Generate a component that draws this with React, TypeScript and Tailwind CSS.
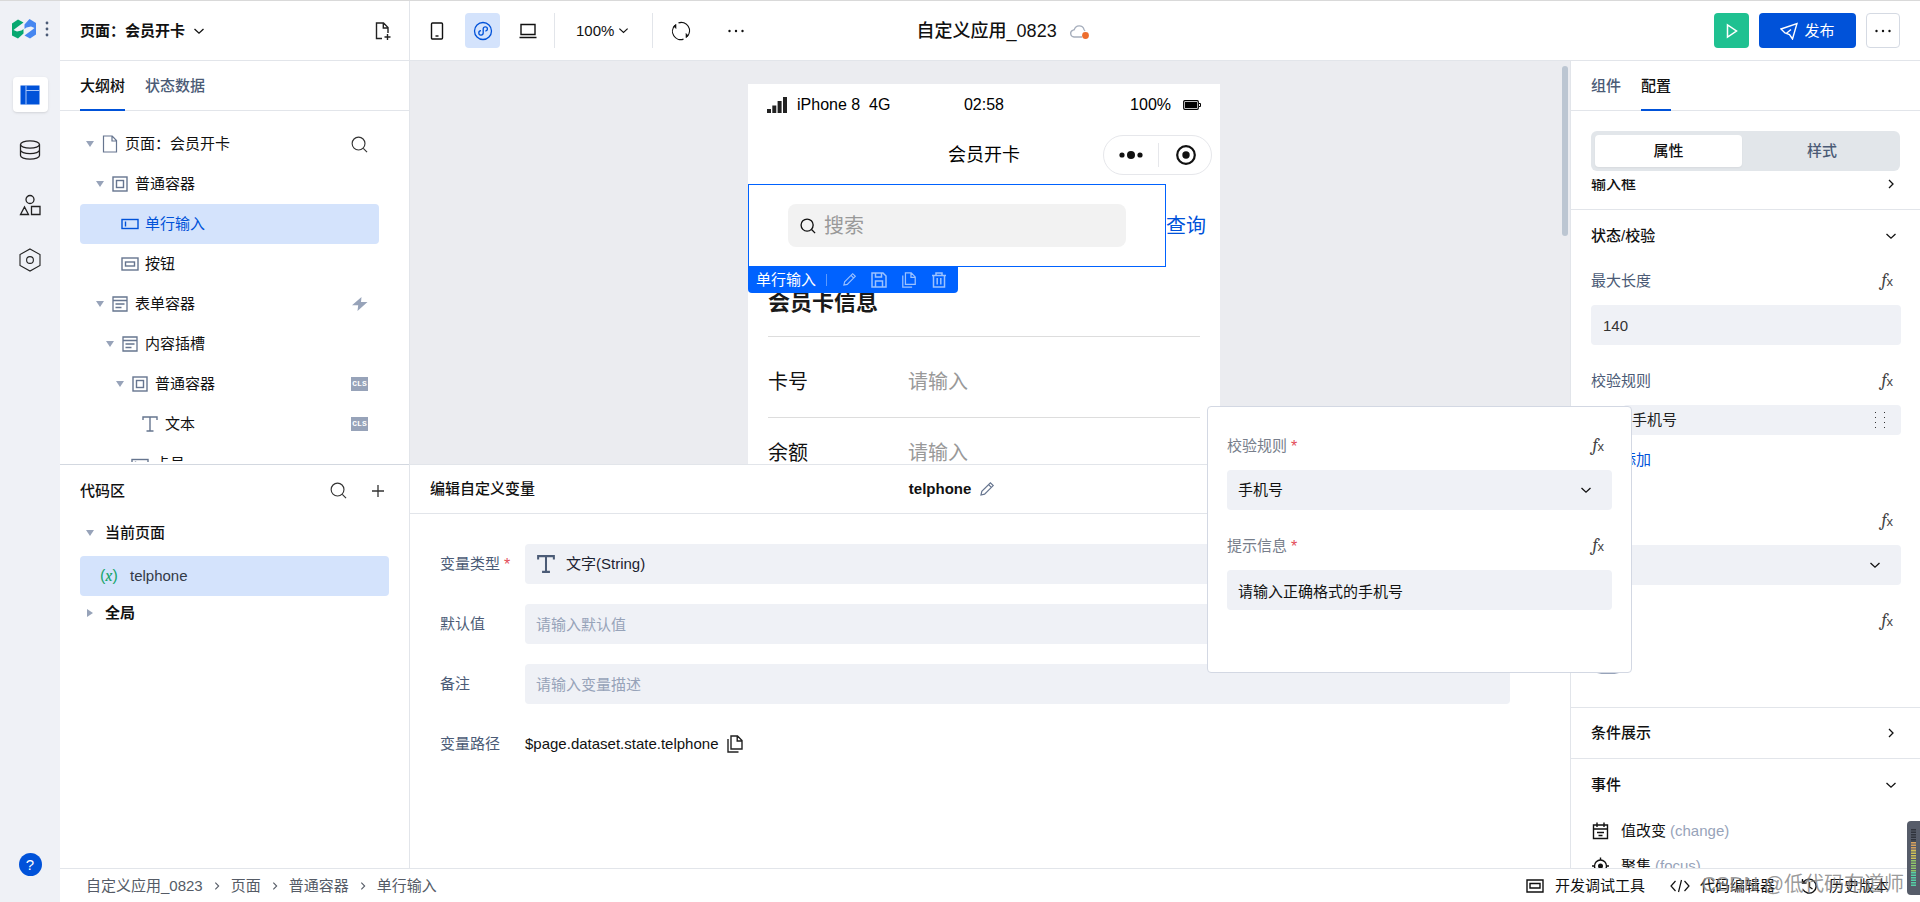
import React from "react";

type IconProps = { className?: string };

const svgBase = {
  fill: "none",
  stroke: "currentColor",
  "aria-hidden": true,
} as const;

const ChevronDown = ({ className = "w-3 h-3" }: IconProps) => (
  <svg viewBox="0 0 12 12" strokeWidth="1.3" className={className} {...svgBase}>
    <path d="M1.5 4L6 8.2 10.500 4" />
  </svg>
);

const ChevronRight = ({ className = "w-3 h-3" }: IconProps) => (
  <svg viewBox="0 0 12 12" strokeWidth="1.3" className={className} {...svgBase}>
    <path d="M4 2l4 4-4 4" />
  </svg>
);

const SearchIcon = ({ className = "w-[18px] h-[18px]" }: IconProps) => (
  <svg viewBox="0 0 18 18" strokeWidth="1.2" className={className} {...svgBase}>
    <circle cx="8" cy="8" r="6.8" />
    <path d="M13 13l4 4" />
  </svg>
);

const DotsIcon = () => (
  <svg viewBox="0 0 18 4" className="h-1 w-[18px]" fill="currentColor" aria-hidden>
    <circle cx="2.5" cy="2" r="1.2" />
    <circle cx="9" cy="2" r="1.2" />
    <circle cx="15.5" cy="2" r="1.2" />
  </svg>
);

const PencilIcon = ({ className = "w-4 h-4" }: IconProps) => (
  <svg viewBox="0 0 16 16" strokeWidth="1.2" className={className} {...svgBase}>
    <path d="M2 14l.8-3.6L11.4 1.8l2.8 2.8-8.6 8.6L2 14zM9.6 3.6l2.8 2.8" />
  </svg>
);

const CopyIcon = ({ className = "w-4 h-[18px]" }: IconProps) => (
  <svg viewBox="0 0 16 18" strokeWidth="1.4" className={className} {...svgBase}>
    <path d="M4 1h6.5L15 5.5V14H4zM10.2 1v5H15" />
    <path d="M1 4v13h10.5" />
  </svg>
);

const PageIcon = () => (
  <svg viewBox="0 0 16 18" strokeWidth="1.2" className="h-[18px] w-4" {...svgBase}>
    <path d="M1.5 1h8.7l4.3 4.5V17h-13zM10 1v5h4.5" />
  </svg>
);

const BoxIcon = () => (
  <svg viewBox="0 0 16 16" strokeWidth="1.4" className="h-4 w-4" {...svgBase}>
    <rect x="1" y="1" width="14" height="14" />
    <rect x="4.5" y="4.5" width="7" height="7" />
  </svg>
);

const InputIcon = () => (
  <svg viewBox="0 0 18 12" strokeWidth="1.4" className="h-3 w-[18px]" {...svgBase}>
    <rect x="1" y="1.5" width="16" height="9" />
    <path d="M4.5 3.5v5" />
  </svg>
);

const ButtonIcon = () => (
  <svg viewBox="0 0 18 14" strokeWidth="1.4" className="h-3.5 w-[18px]" {...svgBase}>
    <rect x="1" y="1" width="16" height="12" />
    <rect x="4.5" y="5" width="9" height="4" />
  </svg>
);

const FormIcon = () => (
  <svg viewBox="0 0 16 16" strokeWidth="1.3" className="h-4 w-4" {...svgBase}>
    <path d="M1 1h14v14H1zM1 4.5h14M3.5 8h9M3.5 11.5h6" />
  </svg>
);

const TypeIcon = ({ className = "w-4 h-4" }: IconProps) => (
  <svg viewBox="0 0 16 16" strokeWidth="1.4" className={className} {...svgBase}>
    <path d="M1 4V1h14v3M8 1v14M4.5 15h7" />
  </svg>
);

const Fx = () => (
  <button type="button" aria-label="表达式" className="flex w-3.5 items-baseline justify-end leading-none text-[#444]">
    <i className="font-serif text-lg leading-none">f</i>
    <span className="text-[13px] leading-none">x</span>
  </button>
);

const Required = () => <span className="ml-1 align-middle text-base leading-none text-[#e34d59]">*</span>;

const Cls = () => (
  <span className="flex h-3.5 w-[17px] items-center justify-center bg-[#97a3b9] font-mono text-[8px] font-bold leading-none text-white">
    CLS
  </span>
);

const Bolt = () => (
  <svg viewBox="0 0 16 14" className="h-3.5 w-4" fill="#97a3b9" aria-hidden>
    <path d="M9.500 0L0 8.200h6.200L5.500 14 15.500 5H9z" />
  </svg>
);

const CaretDown = () => (
  <svg viewBox="0 0 8 6" className="h-1.5 w-2 shrink-0" fill="#97a3b9" aria-hidden>
    <path d="M0 0h8L4 6z" />
  </svg>
);

const CaretRight = () => (
  <svg viewBox="0 0 8 8" className="h-2 w-2 shrink-0" fill="#97a3b9" aria-hidden>
    <path d="M1 0l6 4-6 4z" />
  </svg>
);

const treeRows = [
  { label: "页面：会员开卡", indent: "pl-1.5", icon: <PageIcon />, open: true, extra: <SearchIcon className="h-[17px] w-[17px] text-[#333]" /> },
  { label: "普通容器", indent: "pl-4", icon: <BoxIcon />, open: true },
  { label: "单行输入", indent: "pl-[26px]", icon: <InputIcon />, selected: true },
  { label: "按钮", indent: "pl-[26px]", icon: <ButtonIcon /> },
  { label: "表单容器", indent: "pl-4", icon: <FormIcon />, open: true, extra: <Bolt /> },
  { label: "内容插槽", indent: "pl-[26px]", icon: <FormIcon />, open: true },
  { label: "普通容器", indent: "pl-9", icon: <BoxIcon />, open: true, extra: <Cls /> },
  { label: "文本", indent: "pl-[46px]", icon: <TypeIcon />, extra: <Cls /> },
  { label: "卡号", indent: "pl-9", icon: <InputIcon /> },
];

const Rail = () => (
  <nav className="flex w-[60px] shrink-0 flex-col items-center bg-[#eff1f6] text-[#222]">
    <div className="flex h-14 w-full items-center justify-between pl-3 pr-[11px]">
      <svg viewBox="0 0 24 20" className="h-5 w-6" aria-hidden>
        <path d="M0 4.500L6 .5l5.500 3L4 9l-2.500 2L5 12.500l4.500-1 2-1.500v4.500L6 19.500 0 16.500z" fill="#07a870" />
        <path d="M24 15.500l-6 4-5.500-3L20 11l2.500-2L19 7.500l-4.500 1-2 1.500V5.500L17.500 0 24 4z" fill="#4787f0" />
      </svg>
      <svg viewBox="0 0 4 16" className="h-4 w-1" fill="#4b5b76" aria-hidden>
        <circle cx="2" cy="2" r="1.4" />
        <circle cx="2" cy="8" r="1.4" />
        <circle cx="2" cy="14" r="1.4" />
      </svg>
    </div>
    <div className="mt-5 flex flex-1 flex-col gap-5">
      <button type="button" aria-label="页面设计" className="flex h-[35px] w-[35px] items-center justify-center rounded bg-white shadow">
        <svg viewBox="0 0 20 20" className="h-5 w-5" aria-hidden>
          <path d="M.5.5H6v19H.5zM6 .5h13.5V6H6zM6 6h13.500v13.500H6z" fill="#0052d9" />
          <path d="M6 .5v19M6 5.500h13.500" stroke="#a9c6f8" strokeWidth="1" />
        </svg>
      </button>
      <button type="button" aria-label="数据源" className="flex h-[35px] w-[35px] items-center justify-center">
        <svg viewBox="0 0 22 20" strokeWidth="1.3" className="h-5 w-[22px]" {...svgBase}>
          <ellipse cx="11" cy="4.5" rx="9.5" ry="3.7" />
          <path d="M1.5 4.5v11c0 2 4.2 3.7 9.5 3.7s9.5-1.7 9.5-3.7v-11M1.5 10c0 2 4.2 3.7 9.5 3.7s9.5-1.7 9.5-3.7" />
        </svg>
      </button>
      <button type="button" aria-label="素材" className="flex h-[35px] w-[35px] items-center justify-center">
        <svg viewBox="0 0 22 22" strokeWidth="1.3" className="h-[22px] w-[22px]" {...svgBase}>
          <circle cx="11" cy="5.5" r="4" />
          <path d="M1.5 20.5L5.5 13l4 7.5zM12.500 12.500h8.500v8h-8.500z" />
        </svg>
      </button>
      <button type="button" aria-label="设置" className="flex h-[35px] w-[35px] items-center justify-center">
        <svg viewBox="0 0 22 24" strokeWidth="1.1" className="h-6 w-[22px]" {...svgBase}>
          <path d="M11 1l10 5.5v11L11 23 1 17.500v-11z" />
          <circle cx="11" cy="12" r="3.4" />
        </svg>
      </button>
    </div>
    <button type="button" className="mb-[26px] h-[23px] w-[23px] rounded-full bg-[#0052d9] text-[15px] leading-none text-white">
      ?
    </button>
  </nav>
);

const Header = () => (
  <header className="flex h-[60px] shrink-0 border-b border-[#e2e5ea]">
    <div className="flex w-[350px] shrink-0 items-center border-r border-[#e2e5ea] pl-5 pr-[17px]">
      <button type="button" className="flex items-center gap-2 font-bold">
        页面：会员开卡
        <ChevronDown />
      </button>
      <button type="button" aria-label="新建页面" className="ml-auto text-[#222]">
        <svg viewBox="0 0 18 20" strokeWidth="1.4" className="h-5 w-[18px]" {...svgBase}>
          <path d="M8 17.500H2.500v-15.500h7l4.500 4.500V12M9.300 2v5H14M10.500 16h6M13.500 13v6" />
        </svg>
      </button>
    </div>

    <div className="flex min-w-0 flex-1 items-center pr-5">
      <div className="flex w-[34%] shrink-0 items-center">
        <button type="button" aria-label="手机" className="ml-5 w-3.5">
          <svg viewBox="0 0 14 18" strokeWidth="1.4" className="h-[18px] w-3.5" {...svgBase}>
            <rect x="1.5" y="1" width="11" height="16" rx="1" />
            <path d="M5.500 14h3" />
          </svg>
        </button>
        <button type="button" aria-label="小程序" className="ml-[21px] flex h-[35px] w-[35px] items-center justify-center rounded bg-[#d4e3fc] text-[#0052d9]">
          <svg viewBox="0 0 20 20" strokeWidth="1.3" className="h-5 w-5" {...svgBase}>
            <circle cx="10" cy="10" r="8.5" />
            <path d="M8 9.700A2.200 2.200 0 1 0 10.200 12V7.800A2.100 2.100 0 1 1 12.400 10" />
          </svg>
        </button>
        <button type="button" aria-label="电脑" className="ml-[18px]">
          <svg viewBox="0 0 20 16" strokeWidth="1.4" className="h-4 w-5" {...svgBase}>
            <path d="M3 1.500h14v10H3zM1.500 14.500h17" />
          </svg>
        </button>
        <span className="ml-4 h-[35px] w-px bg-[#e2e5ea]" />
        <button type="button" className="ml-[21px] flex items-center gap-1">
          100%
          <ChevronDown className="h-[11px] w-[11px]" />
        </button>
        <span className="ml-[23px] h-[35px] w-px bg-[#e2e5ea]" />
        <button type="button" aria-label="刷新" className="ml-[18px]">
          <svg viewBox="0 0 20 20" strokeWidth="1.2" className="h-5 w-5" {...svgBase}>
            <path d="M7.500 1.900A8.300 8.300 0 0 1 16.200 15.500M12.500 18.100A8.300 8.300 0 0 1 3.800 4.500" />
            <path d="M5 3.200v4.300L2.800 5.300zM15 16.800v-4.300l2.200 2.200z" fill="currentColor" strokeWidth=".6" />
          </svg>
        </button>
        <button type="button" aria-label="更多" className="ml-9">
          <DotsIcon />
        </button>
      </div>

      <h1 className="whitespace-nowrap text-lg font-medium">自定义应用_0823</h1>
      <svg viewBox="0 0 22 18" className="ml-3 h-[18px] w-[22px]" aria-hidden>
        <path d="M13 15H5a3.500 3.500 0 0 1-1-6.800l1.300-.5A5 5 0 0 1 15 7.500L16 9" fill="none" stroke="#a6aebc" strokeWidth="1.3" />
        <circle cx="16.500" cy="13.500" r="3.400" fill="#ed6d2d" />
      </svg>

      <div className="ml-auto flex items-center gap-2.5">
        <button type="button" aria-label="预览" className="flex h-[35px] w-[35px] items-center justify-center rounded bg-[#1fc191] text-white">
          <svg viewBox="0 0 14 16" strokeWidth="1.5" className="h-4 w-3.5" {...svgBase}>
            <path d="M2.500 2v12l9-6z" />
          </svg>
        </button>
        <button type="button" className="flex h-[35px] w-[97px] items-center justify-center gap-1.5 rounded bg-[#0052d9] text-white">
          <svg viewBox="0 0 18 18" strokeWidth="1.4" className="h-[18px] w-[18px]" {...svgBase}>
            <path d="M1 7L17 1.500l-4.500 15.500-3-4.500L5 11zM6.500 11.200L11 7.500" />
          </svg>
          发布
        </button>
        <button type="button" aria-label="更多操作" className="flex h-[35px] w-[34px] items-center justify-center rounded border border-[#d5dae3]">
          <DotsIcon />
        </button>
      </div>
    </div>
  </header>
);

const Outline = () => (
  <aside className="flex w-[350px] shrink-0 flex-col border-r border-[#e2e5ea]">
    <section className="flex min-h-0 flex-1 flex-col border-b border-[#d3d8e0]">
      <div className="flex h-[50px] shrink-0 gap-5 border-b border-[#e2e5ea] px-5">
        <button type="button" className="h-[50px] border-b-2 border-[#0052d9] pt-0.5 font-medium">大纲树</button>
        <button type="button" className="h-[50px] border-b-2 border-transparent pt-0.5 font-medium text-[#4b5b76]">状态数据</button>
      </div>
      <ul className="mb-0.5 flex-1 overflow-hidden pl-5 pr-[30px] pt-[13px]">
        {treeRows.map((row, i) => (
          <li
            key={i}
            className={
              row.selected
                ? "flex h-10 items-center rounded bg-[#d4e3fc] pr-[11px] text-[#0052d9]"
                : "flex h-10 items-center pr-[11px]"
            }
          >
            <span className={row.indent} />
            <span className="mr-1.5 w-2">{row.open && <CaretDown />}</span>
            <span className={row.selected ? "mr-[5px] flex w-5 justify-center" : "mr-[5px] flex w-5 justify-center text-[#66758f]"}>
              {row.icon}
            </span>
            {row.label}
            <span className="ml-auto flex w-[17px] justify-center">{row.extra}</span>
          </li>
        ))}
      </ul>
    </section>

    <section className="min-h-0 flex-1 overflow-hidden px-5 pt-px">
      <div className="flex h-[50px] items-center">
        <h2 className="font-medium">代码区</h2>
        <button type="button" aria-label="搜索" className="ml-auto text-[#333]">
          <SearchIcon className="h-[17px] w-[17px]" />
        </button>
        <button type="button" aria-label="新增" className="ml-6 text-[#333]">
          <svg viewBox="0 0 14 14" strokeWidth="1.3" className="mr-1 h-3.5 w-3.5" {...svgBase}>
            <path d="M7 1v12M1 7h12" />
          </svg>
        </button>
      </div>
      <div className="flex h-10 items-center gap-[11px] pb-1.5 pl-1.5 font-medium">
        <CaretDown />
        当前页面
      </div>
      <div className="flex h-10 items-center rounded bg-[#d4e3fc] pl-5 text-[#333a47]">
        <span className="w-[30px] text-base text-[#18a56c]">
          (<i className="font-serif">x</i>)
        </span>
        telphone
      </div>
      <div className="flex h-[34px] items-center gap-[11px] pl-1.5 font-bold">
        <CaretRight />
        全局
      </div>
    </section>
  </aside>
);

const phoneFields = [
  { id: "card-no", label: "卡号" },
  { id: "balance", label: "余额" },
];

const Canvas = () => (
  <section className="flex min-h-0 flex-1 overflow-hidden bg-[#ebecf0]">
    <div className="flex flex-1 items-start justify-center pt-[23px]">
      <div className="w-[472px] shrink-0 bg-white">
        <div className="grid h-[42px] grid-cols-3 items-center px-[19px] text-base text-black">
          <span className="flex items-center gap-2.5 whitespace-pre">
            <svg viewBox="0 0 20 16" className="h-4 w-5" fill="#222" aria-hidden>
              <path d="M0 12h4v4H0zM5.300 8.500h4V16h-4zM10.600 4h4v12h-4zM16 0h4v16h-4z" />
            </svg>
            iPhone 8&nbsp; 4G
          </span>
          <span className="text-center">02:58</span>
          <span className="flex items-center justify-end gap-3">
            100%
            <svg viewBox="0 0 18 10" className="h-2.5 w-[18px]" aria-hidden>
              <rect x=".7" y=".7" width="14.6" height="8.6" rx="1" fill="none" stroke="#000" strokeWidth="1.2" />
              <path d="M2 2h12v6H2z" fill="#000" />
              <path d="M16 3.500h1.500v3H16" fill="none" stroke="#000" />
            </svg>
          </span>
        </div>
        <div className="grid h-[58px] grid-cols-3 items-center text-black">
          <span className="col-start-2 text-center text-lg">会员开卡</span>
          <span className="ml-auto mr-2 flex h-10 w-[109px] items-center rounded-full border border-[#e6e7eb]">
            <svg viewBox="0 0 24 8" className="mx-[15px] h-2 w-6" fill="#111" aria-hidden>
              <circle cx="3" cy="4" r="2.6" />
              <circle cx="12" cy="4" r="4" />
              <circle cx="21" cy="4" r="2.6" />
            </svg>
            <span className="h-6 w-px bg-[#e6e7eb]" />
            <svg viewBox="0 0 20 20" className="ml-[17px] h-5 w-5" aria-hidden>
              <circle cx="10" cy="10" r="8.8" fill="none" stroke="#111" strokeWidth="2.2" />
              <circle cx="10" cy="10" r="3.7" fill="#111" />
            </svg>
          </span>
        </div>

        <div className="flex items-center">
          <div className="relative w-[418px] border border-[#0062ff] px-[39px] py-[19px]">
            <label className="flex h-[43px] items-center gap-2 rounded-lg bg-[#f2f2f2] pl-3 text-xl">
              <SearchIcon className="h-4 w-4 stroke-[1.5]" />
              <input aria-label="搜索" placeholder="搜索" className="w-60 outline-none placeholder:text-[#999]" />
            </label>
            {/* toolbar of the selected node */}
            <div className="absolute -left-px top-full flex h-[27px] w-[210px] items-center rounded-b bg-[#0062ff] pl-2 text-white">
              单行输入
              <span className="ml-2.5 h-3 w-px bg-[#5c9aff]" />
              <span className="ml-[15px] flex items-center gap-3.5 text-[#9cc2ff]">
                <button type="button" aria-label="编辑"><PencilIcon className="h-[15px] w-[15px]" /></button>
                <button type="button" aria-label="保存">
                  <svg viewBox="0 0 16 16" strokeWidth="1.5" className="h-4 w-4" {...svgBase}>
                    <path d="M1 1h11l3 3v11H1zM4.500 1v4h6V1M4.500 15V9h7v6" />
                  </svg>
                </button>
                <button type="button" aria-label="复制"><CopyIcon className="h-4 w-4" /></button>
                <button type="button" aria-label="删除">
                  <svg viewBox="0 0 16 16" strokeWidth="1.5" className="h-4 w-4" {...svgBase}>
                    <path d="M1 3.500h14M5 3.500V1h6v2.500M2.500 3.500V15h11V3.500M6.200 6v6.500M9.800 6v6.500" />
                  </svg>
                </button>
              </span>
            </div>
          </div>
          <a href="#query" className="whitespace-nowrap text-xl text-[#0052d9]">查询</a>
        </div>

        <div className="px-5 pt-[19px]">
          <h2 className="h-[51px] border-b border-[#ddd] pt-px text-[22px] font-bold leading-8 text-[#1a1a1a]">会员卡信息</h2>
          <div className="pt-2.5">
            {phoneFields.map((f) => (
              <div key={f.id} className="flex h-[71px] items-center border-b border-[#ddd] text-xl leading-7">
                <label htmlFor={f.id} className="w-[140px]">{f.label}</label>
                <input id={f.id} placeholder="请输入" className="w-60 outline-none placeholder:text-[#999]" />
              </div>
            ))}
          </div>
        </div>
      </div>
    </div>
    <div className="ml-1 mr-0.5 mt-[5px] h-[170px] w-1.5 rounded-full bg-[#bcc6d2]" />
  </section>
);

const fieldBox = "h-10 w-full rounded bg-[#eff1f6] px-[11px] outline-none placeholder:text-[#97a3b9]";

const VariableEditor = () => (
  <section className="flex min-h-0 flex-1 flex-col border-t border-[#e2e5ea]">
    <div className="flex h-[49px] shrink-0 items-center border-b border-[#e2e5ea]">
      <h2 className="w-[43%] pl-5 font-medium">编辑自定义变量</h2>
      <span className="mr-2 font-bold">telphone</span>
      <button type="button" aria-label="重命名" className="text-[#66758f]"><PencilIcon /></button>
    </div>
    <form className="flex flex-col gap-5 pl-[30px] pr-[60px] pt-[30px] text-[#4b5b76]">
      <div className="flex items-center">
        <label htmlFor="var-type" className="w-[85px] shrink-0">变量类型<Required /></label>
        <div className="flex flex-1 items-center rounded bg-[#eff1f6] pl-3">
          <TypeIcon className="h-[18px] w-[18px] stroke-[1.8]" />
          <select id="var-type" className="h-10 flex-1 appearance-none px-[11px] text-[#1c2230] outline-none">
            <option>文字(String)</option>
          </select>
        </div>
      </div>
      <div className="flex items-center">
        <label htmlFor="var-default" className="w-[85px] shrink-0">默认值</label>
        <input id="var-default" placeholder="请输入默认值" className={fieldBox} />
      </div>
      <div className="flex items-center">
        <label htmlFor="var-note" className="w-[85px] shrink-0">备注</label>
        <input id="var-note" placeholder="请输入变量描述" className={fieldBox} />
      </div>
      <div className="flex h-10 items-center">
        <span className="w-[85px] shrink-0">变量路径</span>
        <span className="text-[#111]">$page.dataset.state.telphone</span>
        <button type="button" aria-label="复制路径" className="ml-2 text-[#222]"><CopyIcon /></button>
      </div>
    </form>
  </section>
);

const RulePopup = () => (
  <div className="absolute right-[288px] top-[345px] z-10 h-[267px] w-[425px] rounded border border-[#d3d8e3] bg-white px-[19px] pt-[23px] text-[#777e8b]">
    <div className="flex h-10 items-center justify-between pb-2 pr-2">
      <label htmlFor="rule">校验规则<Required /></label>
      <Fx />
    </div>
    <div className="flex items-center rounded bg-[#eff1f6] pr-5 text-[#111]">
      <select id="rule" className="h-10 flex-1 appearance-none px-[11px] outline-none">
        <option>手机号</option>
      </select>
      <ChevronDown />
    </div>
    <div className="mt-5 flex h-10 items-center justify-between pb-2 pr-2">
      <label htmlFor="rule-tip">提示信息<Required /></label>
      <Fx />
    </div>
    <input id="rule-tip" defaultValue="请输入正确格式的手机号" className="h-10 w-full rounded bg-[#eff1f6] px-[11px] text-[#111] outline-none" />
  </div>
);

const ConfigPanel = () => (
  <aside className="relative flex w-[350px] shrink-0 flex-col border-l border-[#e2e5ea]">
    <div className="flex h-[50px] shrink-0 gap-5 border-b border-[#e2e5ea] px-5">
      <button type="button" className="h-[50px] border-b-2 border-transparent pt-0.5 font-medium text-[#4b5b76]">组件</button>
      <button type="button" className="h-[50px] border-b-2 border-[#0052d9] pt-0.5 font-medium">配置</button>
    </div>
    <div className="mx-5 mb-2 mt-5 flex h-10 shrink-0 gap-1.5 rounded-md bg-[#e2e6ea] p-1">
      <button type="button" className="w-[147px] rounded bg-white font-medium shadow-xs">属性</button>
      <button type="button" className="flex-1 font-medium text-[#4b5b76]">样式</button>
    </div>

    <div className="min-h-0 flex-1 overflow-hidden">
      <div className="-mt-5 flex h-[51px] items-center justify-between border-b border-[#e2e5ea] pl-5 pr-[23px] font-medium">
        输入框
        <ChevronRight />
      </div>
      <div className="mb-1 flex h-[51px] items-center justify-between pl-5 pr-[23px] font-medium">
        状态/校验
        <ChevronDown />
      </div>
      <div className="flex flex-col pl-5 pr-[19px] text-[#4b5b76]">
        <div className="flex h-10 items-center justify-between pb-2 pr-2">
          <label htmlFor="max-len">最大长度</label>
          <Fx />
        </div>
        <input id="max-len" defaultValue="140" className="h-10 rounded bg-[#eff1f6] px-3 text-[#333] outline-none" />
        <div className="mt-5 flex h-10 items-center justify-between pb-2 pr-2">
          校验规则
          <Fx />
        </div>
        <div className="ml-8 flex h-[30px] items-center justify-between rounded bg-[#eff1f6] pl-[9px] pr-[15px] text-[#222]">
          手机号
          <svg viewBox="0 0 12 18" className="h-[18px] w-3" fill="#333" aria-hidden>
            <path d="M1 1h1v1H1zM10 1h1v1h-1zM1 6h1v1H1zM10 6h1v1h-1zM1 11h1v1H1zM10 11h1v1h-1zM1 16h1v1H1zM10 16h1v1h-1z" />
          </svg>
        </div>
        <button type="button" className="flex h-[50px] items-center gap-4 text-[#0052d9]">
          <svg viewBox="0 0 14 14" strokeWidth="1.4" className="h-3.5 w-3.5" {...svgBase}>
            <path d="M7 1v12M1 7h12" />
          </svg>
          添加
        </button>
        <div className="mt-5 flex h-10 items-center justify-end pb-2 pr-2">
          <Fx />
        </div>
        <div className="flex items-center rounded bg-[#eff1f6] pr-5 text-[#111]">
          <select aria-label="校验时机" className="h-10 flex-1 appearance-none px-[11px] outline-none" />
          <ChevronDown />
        </div>
        <div className="mt-5 flex h-10 items-center justify-end pb-2 pr-2">
          <Fx />
        </div>
        <input type="checkbox" role="switch" aria-label="只读" className="mb-[33px] mt-2 h-[21px] w-[34px] appearance-none rounded-full bg-[#97a3b9]" />
      </div>
      <div className="flex h-[52px] items-center justify-between border-y border-[#e2e5ea] pl-5 pr-[23px] font-medium">
        条件展示
        <ChevronRight />
      </div>
      <div className="mb-[3px] flex h-[51px] items-center justify-between pl-5 pr-[23px] font-medium">
        事件
        <ChevronDown />
      </div>
      <div className="flex h-[35px] items-center px-5">
        <svg viewBox="0 0 18 18" strokeWidth="1.4" className="mr-3 h-[18px] w-[18px]" {...svgBase}>
          <path d="M2.500 3h14v13.500h-14zM2.500 7h14M6 .5V5M13 .5V5M6 10.500h7M7.500 13.500h4" />
        </svg>
        值改变 <span className="ml-1 text-[#97a3b9]">(change)</span>
      </div>
      <div className="flex h-[35px] items-center px-5">
        <svg viewBox="0 0 18 18" strokeWidth="1.4" className="mr-3 h-[18px] w-[18px]" {...svgBase}>
          <circle cx="9.500" cy="9" r="6" />
          <circle cx="9.500" cy="9" r="1.800" fill="currentColor" />
          <path d="M9.500 .5V3M9.500 15v2.500M1 9h2.500M15.500 9H18" />
        </svg>
        聚集 <span className="ml-1 text-[#97a3b9]">(focus)</span>
      </div>
    </div>

    <RulePopup />
  </aside>
);

const crumbs = ["自定义应用_0823", "页面", "普通容器", "单行输入"];

const Footer = () => (
  <footer className="flex h-[34px] shrink-0 items-center border-t border-[#e2e5ea] pl-[26px] pr-[31px]">
    <nav className="flex items-center gap-[9px] text-[#555b66]">
      {crumbs.map((c, i) => (
        <React.Fragment key={c}>
          {i > 0 && <ChevronRight className="h-3 w-2.5" />}
          <a href="#crumb">{c}</a>
        </React.Fragment>
      ))}
    </nav>
    <div className="ml-auto flex items-center">
      <button type="button" className="flex items-center gap-[11px]">
        <svg viewBox="0 0 18 14" strokeWidth="1.4" className="h-3.5 w-[18px]" {...svgBase}>
          <path d="M1 1h16v12H1zM4 4.500h10v4.500H4z" />
        </svg>
        开发调试工具
      </button>
      <button type="button" className="ml-[25px] flex items-center gap-2.5">
        <svg viewBox="0 0 20 14" strokeWidth="1.2" className="h-3.5 w-5" {...svgBase}>
          <path d="M5.500 2L1 7l4.500 5M14.500 2L19 7l-4.500 5M11.500 1l-3 12" />
        </svg>
        代码编辑器
      </button>
      <button type="button" className="ml-[25px] flex items-center gap-[11px]">
        <svg viewBox="0 0 18 18" strokeWidth="1.4" className="h-[18px] w-[18px]" {...svgBase}>
          <path d="M3.500 5A7 7 0 1 1 3 12.500M2.500 2v4h4M9.500 5v5l3 2" />
        </svg>
        历史版本
      </button>
    </div>
  </footer>
);

const App: React.FC = () => {
  return (
    <div className="relative flex h-screen overflow-hidden border-t border-[#d9d9d9] bg-white font-['Liberation_Sans','Noto_Sans_CJK_SC',sans-serif] text-[15px] leading-5 text-[#111]">
      <Rail />
      <div className="flex min-w-0 flex-1 flex-col">
        <Header />
        <div className="flex min-h-0 flex-1">
          <Outline />
          <main className="flex min-w-0 flex-1 flex-col">
            <Canvas />
            <VariableEditor />
          </main>
          <ConfigPanel />
        </div>
        <Footer />
      </div>

      <span className="pointer-events-none absolute bottom-1 right-4 whitespace-nowrap text-xl leading-7 text-[#808080]/80">
        CSDN @低代码布道师
      </span>
      {/* desktop level meter docked on the window edge */}
      <div className="absolute bottom-[7px] right-0 flex h-[74px] w-[13px] justify-center rounded-l bg-[#565c69] py-2">
        <svg viewBox="0 0 5 58" className="h-[58px] w-[5px]" strokeWidth="5" strokeDasharray="1.5 1" aria-hidden>
          <path d="M2.500 0v13" stroke="#30343d" />
          <path d="M2.500 13v8" stroke="#d9a25c" />
          <path d="M2.500 21v10" stroke="#cfc156" />
          <path d="M2.500 31v12" stroke="#8fc66a" />
          <path d="M2.500 43v15" stroke="#55cfa5" />
        </svg>
      </div>
    </div>
  );
};

export default App;
